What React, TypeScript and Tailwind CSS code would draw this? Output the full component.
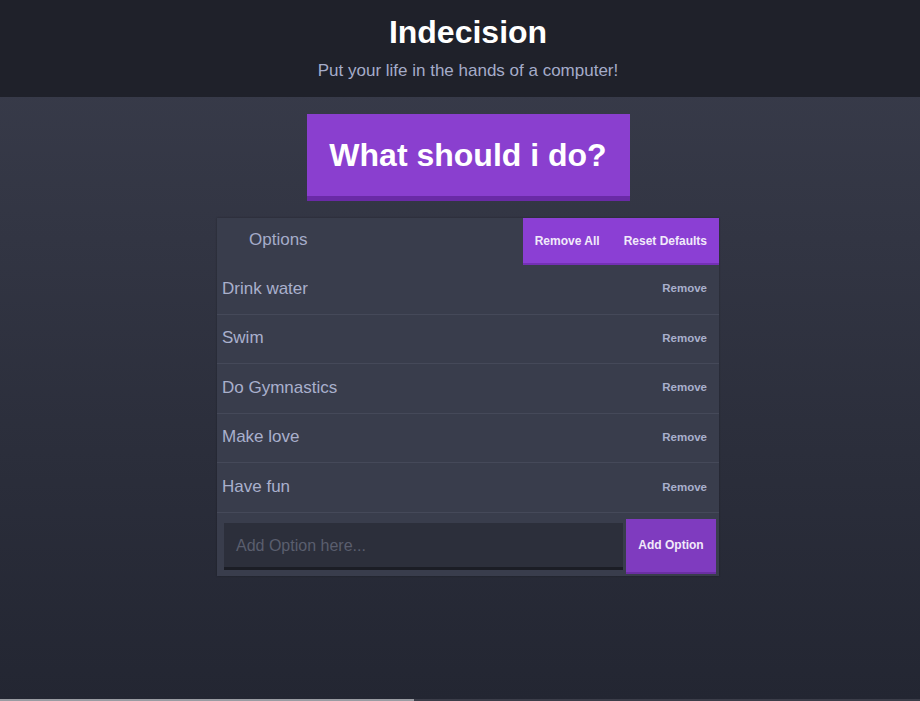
import React from "react";

const options = ["Drink water", "Swim", "Do Gymnastics", "Make love", "Have fun"];

export default function App() {
  return (
    <div
      className="h-[701px] w-full flex flex-col bg-gradient-to-b from-[#3a3d4c] to-[#232632] overflow-hidden"
      style={{ fontFamily: '"Liberation Sans", Arial, sans-serif' }}
    >
      <header className="h-[97px] bg-[#1f212a] flex flex-col items-center pl-4 shrink-0">
        <h1 className="mt-[13px] text-[32px] leading-[38px] font-bold text-white">Indecision</h1>
        <p className="mt-[10px] text-[17px] leading-[20px] text-[#a5acc9]">Put your life in the hands of a computer!</p>
      </header>

      <main className="flex-1 flex flex-col items-center pl-4">
        <button className="mt-[17px] w-[323px] h-[87px] bg-[#8a3fcf] border-b-[5px] border-[#6a2aa6] text-white text-[32px] font-bold leading-none">
          What should i do?
        </button>

        <div className="mt-[17px] w-[502px] bg-[#393d4c] shadow-[0_0_2px_rgba(0,0,0,0.3)]">
          <div className="h-[47px] flex items-stretch justify-between">
            <span className="pl-[32px] self-center text-[17px] text-[#a5acc9] -mt-[3px]">Options</span>
            <div className="flex bg-[#8b3fd4] border-b-2 border-[#7430b5]">
              <button className="px-3 text-[12px] font-bold text-[#f1eafa]">Remove All</button>
              <button className="px-3 text-[12px] font-bold text-[#f1eafa]">Reset Defaults</button>
            </div>
          </div>
          {options.map((o) => (
            <div key={o} className="h-[49.6px] flex items-center justify-between border-b border-[#454959] pl-[5px] pr-[12px]">
              <span className="text-[17px] text-[#a9b0cc] -mt-[2px]">{o}</span>
              <button className="text-[11.5px] font-bold text-[#a9b0cc] -mt-[1px]">Remove</button>
            </div>
          ))}
          <div className="flex items-center pl-[7px] pr-[3px] pt-[6px] pb-[2px]">
            <div className="flex-1 h-[47px] bg-[#2c2f3b] border-b-[3px] border-[#1b1d25] flex items-center pl-3">
              <span className="text-[16px] text-[#5a5e6e] mt-[2px]">Add Option here...</span>
            </div>
            <button className="ml-[3px] w-[90px] h-[55px] bg-[#7f3bbf] border-b-2 border-[#6b2fa3] text-[12px] font-bold text-[#f1eafa]">
              Add Option
            </button>
          </div>
        </div>
      </main>

      <div className="h-[2px] flex shrink-0">
        <div className="w-[414px] bg-[#9a9ca3]" />
        <div className="flex-1 bg-[#3b3d49]" />
      </div>
    </div>
  );
}
